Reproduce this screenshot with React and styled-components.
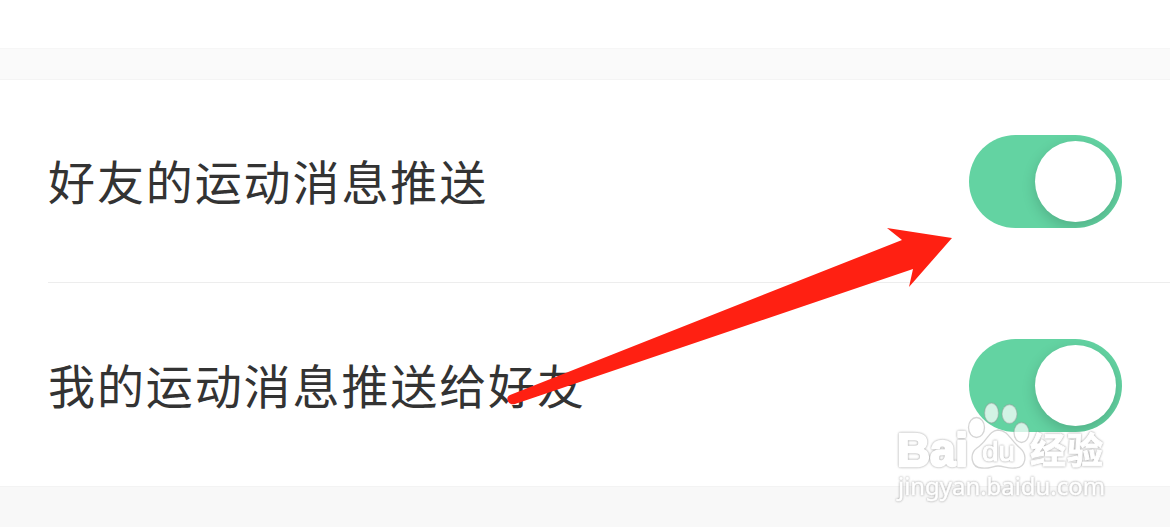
import React, { useState } from 'react';
import styled, { createGlobalStyle } from 'styled-components';

const GlobalStyle = createGlobalStyle`
  body {
    margin: 0;
    background-color: #f9f9f9;
    overflow: hidden;
  }
`;

const Page = styled.div`
  position: relative;
  height: 527px;
  overflow: hidden;
  display: flex;
  flex-direction: column;
  background-color: #f8f8f8;
  font-family: 'Noto Sans CJK SC', sans-serif;
`;

const PreviousSection = styled.div`
  height: 48px;
  box-sizing: border-box;
  background-color: #fff;
`;

const Gap = styled.div`
  height: 32px;
  box-sizing: border-box;
  border-top: 1px solid #f6f6f6;
  border-bottom: 1px solid #f4f4f4;
  background-color: #fafafa;
`;

const Section = styled.div`
  padding-left: 48px;
  background-color: #fff;
  border-bottom: 1px solid #f3f3f3;
`;

const Row = styled.div`
  height: 202px;
  box-sizing: border-box;
  padding: 1px 48px 0 0;
  display: flex;
  align-items: center;
  justify-content: space-between;

  & + & {
    height: 204px;
    border-top: 1px solid #ededed;
  }
`;

const Label = styled.span`
  padding-bottom: 3px;
  font-size: 47px;
  line-height: 70px;
  letter-spacing: 1.9px;
  color: #333;
`;

const Switch = styled.button`
  width: 153px;
  height: 93px;
  padding: 6px;
  display: flex;
  justify-content: ${({ $on }) => ($on ? 'flex-end' : 'flex-start')};
  border: none;
  border-radius: 47px;
  overflow: hidden;
  background-color: ${({ $on }) => ($on ? '#63d3a2' : '#e5e5e5')};
  cursor: pointer;
`;

const Knob = styled.span`
  width: 81px;
  height: 81px;
  border-radius: 50%;
  background-color: #fff;
  box-shadow: 0 5px 14px rgba(0, 0, 0, 0.17);
`;

const Arrow = styled.svg`
  position: absolute;
  top: 0;
  left: 0;
  pointer-events: none;
`;

const Watermark = styled.svg`
  position: absolute;
  top: 395px;
  left: 890px;
  pointer-events: none;

  path,
  ellipse {
    fill: rgba(255, 255, 255, 0.72);
    stroke: rgba(150, 150, 150, 0.4);
    stroke-width: 1.3px;
  }
`;

const Outlined = styled.text`
  fill: #fff;
  stroke: #fff;
  stroke-width: ${({ $weight }) => $weight}px;
  stroke-linejoin: round;
  filter: drop-shadow(0 0 0.8px rgba(120, 120, 120, 0.75));
`;

const settings = [
  { id: 'friends', title: '好友的运动消息推送' },
  { id: 'mine', title: '我的运动消息推送给好友' },
];

const App = () => {
  const [enabled, setEnabled] = useState({ friends: true, mine: true });

  const toggle = (id) => setEnabled({ ...enabled, [id]: !enabled[id] });

  return (
    <>
      <GlobalStyle />
      <Page>
        <PreviousSection />
        <Gap />
        <Section>
          {settings.map(({ id, title }) => (
            <Row key={id}>
              <Label>{title}</Label>
              <Switch
                role="switch"
                aria-checked={enabled[id]}
                aria-label={title}
                $on={enabled[id]}
                onClick={() => toggle(id)}
              >
                <Knob />
              </Switch>
            </Row>
          ))}
        </Section>

        <Arrow width="1170" height="527" viewBox="0 0 1170 527">
          <path
            d="M510 395 L902 240 L887 228 L952 238 L909 287 L913 269 L515 404 C509 406 504 398 510 395 Z"
            fill="#ff2012"
          />
        </Arrow>

        <Watermark width="230" height="120" viewBox="0 0 230 120">
          <Outlined $weight={2.5} x="7" y="71" fontFamily="Liberation Sans" fontWeight="700" fontSize="46" textLength="71" lengthAdjust="spacingAndGlyphs">Bai</Outlined>
          <ellipse cx="86.500" cy="32.500" rx="8" ry="10" />
          <ellipse cx="101.500" cy="18" rx="7" ry="10" />
          <ellipse cx="119.500" cy="19" rx="7.500" ry="9.500" />
          <ellipse cx="131.500" cy="37.500" rx="7.500" ry="10" />
          <path d="M108 35 C98 36 98 46 87 53 C79 59 81 73 92 73 C99 74 103 71 108 71 C114 71 118 74 125 73 C136 73 138 60 130 53 C119 44 119 36 108 35 Z" />
          <Outlined $weight={1} x="92" y="66" fontFamily="Liberation Sans" fontSize="28" textLength="33" lengthAdjust="spacingAndGlyphs">du</Outlined>
          <Outlined $weight={1} x="140" y="69" fontFamily="Noto Sans CJK SC" fontWeight="700" fontSize="36" textLength="73">经验</Outlined>
          <Outlined $weight={0.5} x="8" y="100" fontFamily="Noto Sans" fontSize="23" textLength="207" lengthAdjust="spacingAndGlyphs">jingyan.baidu.com</Outlined>
        </Watermark>
      </Page>
    </>
  );
};

export default App;
